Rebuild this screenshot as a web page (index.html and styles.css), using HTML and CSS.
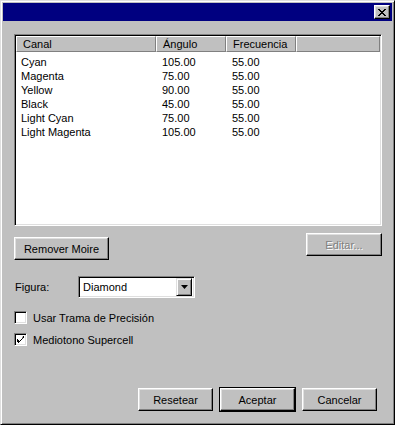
FILE: index.html
```html
<!DOCTYPE html>
<html lang="es">

<head>
    <meta charset="UTF-8">
    <title>Trama</title>
    <link rel="stylesheet" href="styles.css">
</head>

<body>
    <div class="window">
        <div class="titlebar">
            <button class="close-btn" aria-label="Cerrar">
                <svg width="8" height="7" viewBox="0 0 8 7">
                    <path d="M0 0h2v1h1v1h2v-1h1v-1h2v1h-1v1h-1v1h-1v1h1v1h1v1h1v1h-2v-1h-1v-1h-2v1h-1v1h-2v-1h1v-1h1v-1h1v-1h-1v-1h-1v-1h-1z" fill="#000" />
                </svg>
            </button>
        </div>

        <div class="content">
            <div class="list">
                <div class="list-header">
                    <div class="hcell col-canal">Canal</div>
                    <div class="hcell col-angulo">Ángulo</div>
                    <div class="hcell col-frec">Frecuencia</div>
                    <div class="hcell col-fill"></div>
                </div>
                <div class="list-rows">
                    <div class="row"><span class="col-canal">Cyan</span><span class="col-angulo">105.00</span><span class="col-frec">55.00</span></div>
                    <div class="row"><span class="col-canal">Magenta</span><span class="col-angulo">75.00</span><span class="col-frec">55.00</span></div>
                    <div class="row"><span class="col-canal">Yellow</span><span class="col-angulo">90.00</span><span class="col-frec">55.00</span></div>
                    <div class="row"><span class="col-canal">Black</span><span class="col-angulo">45.00</span><span class="col-frec">55.00</span></div>
                    <div class="row"><span class="col-canal">Light Cyan</span><span class="col-angulo">75.00</span><span class="col-frec">55.00</span></div>
                    <div class="row"><span class="col-canal">Light Magenta</span><span class="col-angulo">105.00</span><span class="col-frec">55.00</span></div>
                </div>
            </div>

            <div class="list-actions">
                <button class="btn btn-moire">Remover Moire</button>
                <button class="btn btn-edit" disabled>Editar...</button>
            </div>

            <div class="field">
                <span class="field-label">Figura:</span>
                <div class="select">
                    <span class="select-value">Diamond</span>
                    <span class="select-arrow">
                        <svg width="7" height="4" viewBox="0 0 7 4">
                            <path d="M0 0h7l-3.5 4z" fill="#000" />
                        </svg>
                    </span>
                </div>
            </div>

            <div class="checks">
                <label class="check">
                    <span class="box"></span>
                    Usar Trama de Precisión
                </label>
                <label class="check">
                    <span class="box">
                        <svg width="7" height="7" viewBox="0 0 7 7">
                            <path d="M6 0h1v2h-1v1h-1v1h-1v1h-1v1h-1v1h-1v-1h-1v-3h1v1h1v1h1v-1h1v-1h1z" fill="#000" />
                        </svg>
                    </span>
                    Mediotono Supercell
                </label>
            </div>

            <div class="footer">
                <button class="btn">Resetear</button>
                <button class="btn btn-default">Aceptar</button>
                <button class="btn">Cancelar</button>
            </div>
        </div>
    </div>
</body>

</html>
```

FILE: styles.css
```css
body {
    margin: 0;
    padding: 0;
    font-family: "Liberation Sans", Arial, sans-serif;
    font-size: 11px;
    color: #000;
    background-color: #c0c0c0;
}

.window {
    box-sizing: border-box;
    width: 395px;
    height: 425px;
    display: flex;
    flex-direction: column;
    padding: 2px;
    background-color: #c0c0c0;
    border: 1px solid;
    border-color: #dfdfdf #000 #000 #dfdfdf;
    box-shadow: inset 1px 1px #fff, inset -1px -1px #808080;
}

.titlebar {
    height: 18px;
    display: flex;
    align-items: center;
    justify-content: flex-end;
    padding-right: 2px;
    background-color: #000080;
}

.close-btn {
    box-sizing: border-box;
    width: 16px;
    height: 14px;
    padding: 0;
    display: flex;
    align-items: center;
    justify-content: center;
    background-color: #c0c0c0;
    border: 1px solid;
    border-color: #fff #000 #000 #fff;
    box-shadow: inset -1px -1px #808080, inset 1px 1px #dfdfdf;
}

.content {
    flex: 1;
    display: flex;
    flex-direction: column;
    padding: 13px 10px 11px 11px;
}

/* list view */
.list {
    box-sizing: border-box;
    width: 368px;
    height: 192px;
    background-color: #fff;
    border: 1px solid;
    border-color: #808080 #fff #fff #808080;
    box-shadow: inset 1px 1px #000, inset -1px -1px #dfdfdf;
    padding: 1px;
    overflow: hidden;
}

.list-header {
    display: flex;
    height: 16px;
}

.hcell {
    box-sizing: border-box;
    height: 16px;
    line-height: 14px;
    padding-left: 6px;
    background-color: #c0c0c0;
    border: 1px solid;
    border-color: #fff #808080 #808080 #fff;
    white-space: nowrap;
}

.list-header .col-canal {
    width: 140px;
}

.list-header .col-angulo,
.list-header .col-frec {
    width: 70px;
}

.col-fill {
    flex: 1;
}

.list-rows {
    padding-top: 3px;
}

.row {
    display: flex;
    height: 14px;
    line-height: 14px;
    white-space: nowrap;
}

.row span {
    box-sizing: border-box;
}

.row .col-canal {
    width: 146px;
    padding-left: 5px;
}

.row .col-angulo {
    width: 70px;
}

.row .col-frec {
    width: 70px;
}

/* buttons */
.btn {
    box-sizing: border-box;
    width: 75px;
    height: 23px;
    padding: 0;
    font-family: inherit;
    font-size: 11px;
    color: #000;
    background-color: #c0c0c0;
    border: 1px solid;
    border-color: #fff #000 #000 #fff;
    box-shadow: inset -1px -1px #808080, inset 1px 1px #dfdfdf;
}

.btn:disabled {
    color: #808080;
    text-shadow: 1px 1px #fff;
}

.btn-default {
    outline: 1px solid #000;
}

.list-actions {
    display: flex;
    justify-content: space-between;
    align-items: flex-start;
    width: 368px;
    margin-top: 7px;
}

.btn-moire {
    width: 95px;
    margin-top: 4px;
}

.btn-edit {
    width: 76px;
}

/* shape selector */
.field {
    display: flex;
    align-items: center;
    margin-top: 16px;
}

.field-label {
    width: 63px;
    padding-left: 1px;
}

.select {
    box-sizing: border-box;
    width: 117px;
    height: 22px;
    display: flex;
    align-items: center;
    justify-content: space-between;
    padding: 2px;
    background-color: #fff;
    border: 1px solid;
    border-color: #808080 #fff #fff #808080;
    box-shadow: inset 1px 1px #000, inset -1px -1px #dfdfdf;
}

.select-value {
    padding-left: 2px;
}

.select-arrow {
    box-sizing: border-box;
    width: 16px;
    height: 18px;
    display: flex;
    align-items: center;
    justify-content: center;
    background-color: #c0c0c0;
    border: 1px solid;
    border-color: #dfdfdf #000 #000 #dfdfdf;
    box-shadow: inset 1px 1px #fff, inset -1px -1px #808080;
}

/* checkboxes */
.checks {
    display: flex;
    flex-direction: column;
    gap: 9px;
    margin-top: 13px;
}

.check {
    display: flex;
    align-items: center;
    gap: 6px;
    height: 13px;
}

.box {
    box-sizing: border-box;
    width: 13px;
    height: 13px;
    display: flex;
    align-items: center;
    justify-content: center;
    background-color: #fff;
    border: 1px solid;
    border-color: #808080 #fff #fff #808080;
    box-shadow: inset 1px 1px #000, inset -1px -1px #dfdfdf;
}

.footer {
    margin-top: auto;
    display: flex;
    justify-content: flex-end;
    gap: 7px;
    padding-right: 5px;
}
```
